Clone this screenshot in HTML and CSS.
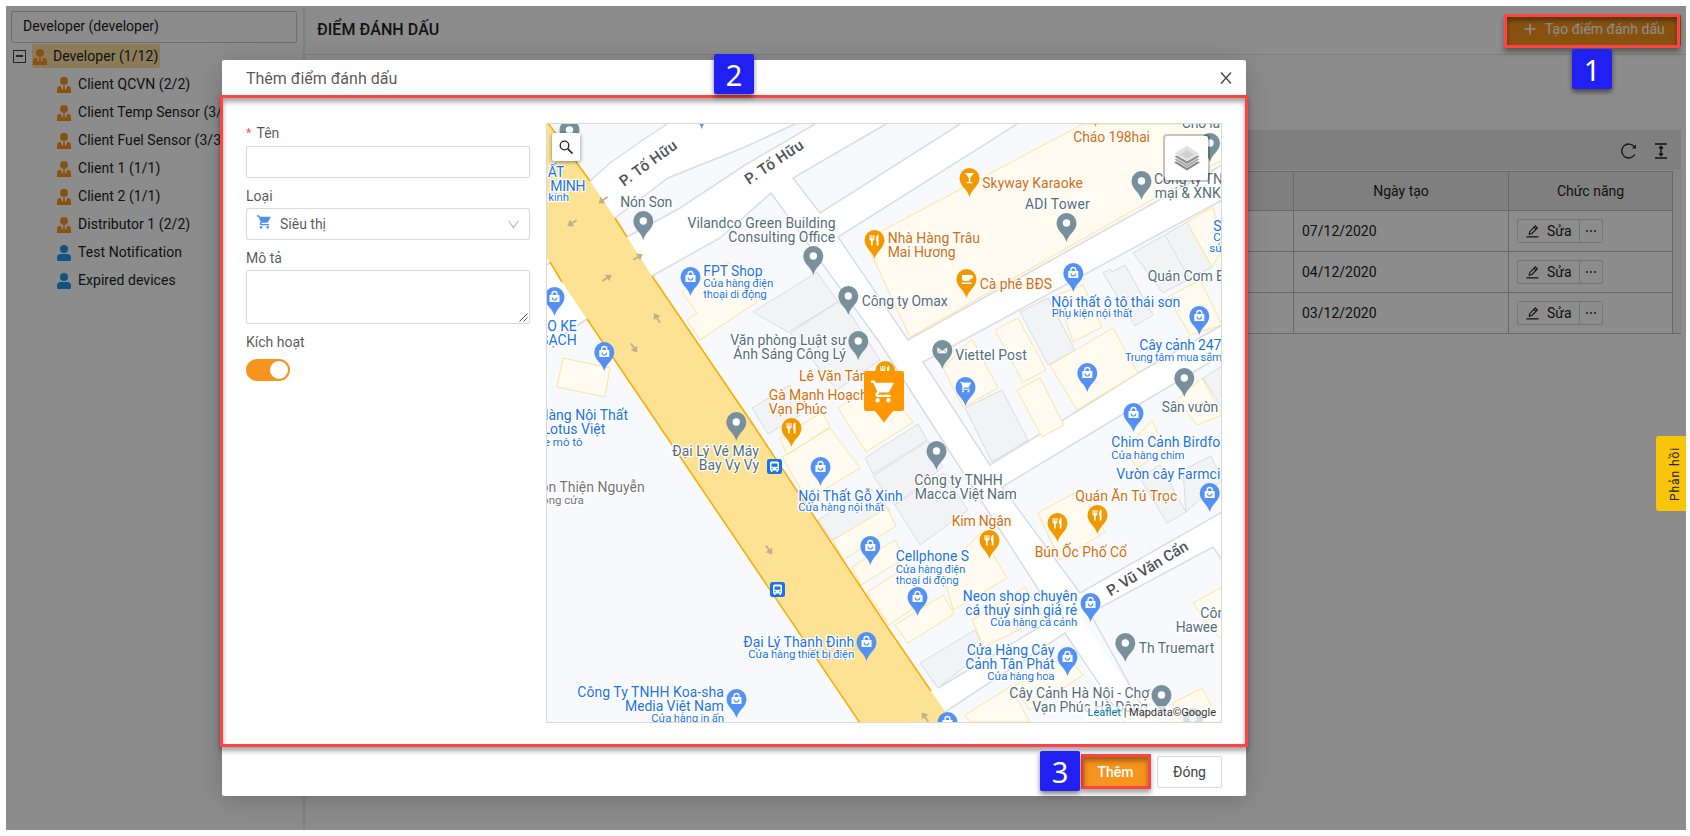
FILE: index.html
```html
<!DOCTYPE html>
<html lang="vi">
<head>
<meta charset="utf-8">
<title>Điểm đánh dấu</title>
<link rel="stylesheet" href="styles.css">
</head>
<body>
<svg width="0" height="0" class="defs">
  <defs>
    <symbol id="manager" viewBox="0 0 14 16"><circle cx="7" cy="4" r="4"/><path d="M0 16v-3.500q0-3.500 3.500-3.700L5.500 13.500 6.300 10 5.700 8.800H8.300L7.700 10 8.500 13.500 10.500 8.800Q14 9 14 12.500V16Z"/></symbol>
    <symbol id="user" viewBox="0 0 14 16"><circle cx="7" cy="4" r="4"/><path d="M0 14.500V13Q0 9 4 9h6q4 0 4 4v1.500q0 1.500-1.500 1.500h-11Q0 16 0 14.500Z"/></symbol>
    <symbol id="cart" viewBox="1 2 21 20"><path d="M7 18a2 2 0 1 0 0 4 2 2 0 0 0 0-4ZM1 2v2h2l3.600 7.600-1.400 2.400C4.500 15.400 5.500 17 7 17h12v-2H7.400l1.100-2h7.500q1.200 0 1.700-1L21.500 5q.5-1-.9-1H5.200l-.9-2ZM17 18a2 2 0 1 0 0 4 2 2 0 0 0 0-4Z"/></symbol>
    <symbol id="edit" viewBox="0 0 14 14"><path d="M.5 13.300h13M3.500 10.500l.7-3L10 1.500l2.200 2.200-5.800 5.900-2.900.9ZM8.500 3l2.200 2.200" fill="none" stroke="currentColor" stroke-width="1.200"/></symbol>
    <g id="drop"><path d="M0 19C-2 11-10 8-10 0A10 10 0 0 1 10 0C10 8 2 11 0 19Z"/></g>
    <g id="pin"><use href="#drop" fill="#78909c"/><circle r="3.700" fill="#fff"/></g>
    <g id="shop"><use href="#drop" fill="#5491f5"/><path d="M-5-2H5V5H-5Z" fill="#fff"/><path d="M-2.500-2v-1a2.500 2.500 0 0 1 5 0v1" fill="none" stroke="#fff" stroke-width="1.300"/><path d="M-2.300.5a2.300 2.500 0 0 0 4.600 0" fill="none" stroke="#5491f5" stroke-width="1.200"/></g>
    <g id="food"><use href="#drop" fill="#f29900"/><path d="M-5-5V-1Q-5 .5-3.400.7V5.500h1.600V.7Q0 .5 0-1V-5H-1V-1.500h-1V-5h-1.200v3.500h-.8V-5ZM2.200 5.500H4V-5.500Q1.500-5 1.500-1V1h.7Z" fill="#fff"/></g>
    <g id="bus"><rect x="-7.500" y="-7.500" width="15" height="15" rx="2.500" fill="#1a73e8"/><path d="M-4.500-3.500Q-4.500-5-3-5H3Q4.500-5 4.500-3.500V4H3.500V5.500H2V4H-2V5.500H-3.500V4H-4.500Z" fill="#fff"/><path d="M-3-3H3V.3H-3Z" fill="#1a73e8"/><circle cx="-2.500" cy="2.200" r=".8" fill="#1a73e8"/><circle cx="2.500" cy="2.200" r=".8" fill="#1a73e8"/></g>
    <path id="arrow" d="M-5.500-1H0V-4L5.500 0 0 4V1H-5.500Z" fill="#c0b088"/>
  </defs>
</svg>

<div class="app">
  <aside class="sidebar">
    <div class="account">Developer (developer)</div>
    <div class="node root"><span class="toggle"></span><span class="picked"><svg class="ico"><use href="#manager"/></svg>Developer (1/12)</span></div>
    <div class="node"><svg class="ico"><use href="#manager"/></svg>Client QCVN (2/2)</div>
    <div class="node"><svg class="ico"><use href="#manager"/></svg>Client Temp Sensor (3/3)</div>
    <div class="node"><svg class="ico"><use href="#manager"/></svg>Client Fuel Sensor (3/3)</div>
    <div class="node"><svg class="ico"><use href="#manager"/></svg>Client 1 (1/1)</div>
    <div class="node"><svg class="ico"><use href="#manager"/></svg>Client 2 (1/1)</div>
    <div class="node"><svg class="ico"><use href="#manager"/></svg>Distributor 1 (2/2)</div>
    <div class="node"><svg class="ico blue"><use href="#user"/></svg>Test Notification</div>
    <div class="node"><svg class="ico blue"><use href="#user"/></svg>Expired devices</div>
  </aside>
  <main class="main">
    <header class="top"><h1>ĐIỂM ĐÁNH DẤU</h1>
      <button class="create"><svg width="12" height="12" viewBox="0 0 12 12"><path d="M6 .5v11M.5 6h11" stroke="#fff" stroke-width="1.600"/></svg>Tạo điểm đánh dấu</button>
    </header>
    <section class="list">
      <div class="tools">
        <svg width="16" height="16" viewBox="0 0 16 16" fill="none" stroke="#222" stroke-width="1.300"><path d="M13.800 11.500A7 7 0 1 1 13.500 4"/><path d="M15 1.500v4h-4Z" fill="#222" stroke="none"/></svg>
        <svg width="14" height="16" viewBox="0 0 14 16" fill="none" stroke="#222" stroke-width="1.400"><path d="M1 1h12M1 15h12M7 4v8M5 5.500l2-2 2 2M5 10.500l2 2 2-2"/></svg>
      </div>
      <div class="grid">
        <div class="row head"><span></span><span>Ngày tạo</span><span>Chức năng</span></div>
        <div class="row"><span></span><span>07/12/2020</span><span><b class="act"><svg width="13" height="14"><use href="#edit"/></svg>Sửa</b><b class="more"><i></i><i></i><i></i></b></span></div>
        <div class="row"><span></span><span>04/12/2020</span><span><b class="act"><svg width="13" height="14"><use href="#edit"/></svg>Sửa</b><b class="more"><i></i><i></i><i></i></b></span></div>
        <div class="row"><span></span><span>03/12/2020</span><span><b class="act"><svg width="13" height="14"><use href="#edit"/></svg>Sửa</b><b class="more"><i></i><i></i><i></i></b></span></div>
      </div>
    </section>
  </main>

  <div class="mask">
    <div class="modal">
      <div class="modal-head"><span>Thêm điểm đánh dấu</span>
        <svg width="12" height="12" viewBox="0 0 12 12"><path d="M1 .5l10 11M11 .5L1 11.500" stroke="#444" stroke-width="1.300"/></svg></div>
      <div class="modal-body">
        <form class="form">
          <label><em>*</em>Tên</label>
          <div class="field"></div>
          <label class="l2">Loại</label>
          <div class="field select"><svg width="14" height="14" fill="#4791f0"><use href="#cart"/></svg><span>Siêu thị</span><svg width="11" height="9" viewBox="0 0 11 9"><path d="M.7 1l4.800 6.700L10.300 1" fill="none" stroke="#bbb" stroke-width="1.200"/></svg></div>
          <label class="l3">Mô tả</label>
          <div class="field area"><svg width="9" height="9" viewBox="0 0 9 9"><path d="M.5 8.500l8-8M4.500 8.500l4-4" stroke="#555" stroke-width="1"/></svg></div>
          <label class="l4">Kích hoạt</label>
          <div class="switch"><i></i></div>
        </form>
        <div class="map">
          <svg class="canvas" viewBox="547 124 674 598" width="674" height="598">
            <rect x="547" y="124" width="674" height="598" fill="#f8f9fc"/>
            <g fill="#fff">
              <path d="M590 181L610 163 640 142 667 124H795L745 147 700 165 668 178 615 218Z"/>
              <path d="M627 237L680 208 745 165 815 124H1017L838 237 771 193 720 238 652 276Z"/>
              <path d="M590 181L615 218 627 237 652 276 640 270Z"/>
              <path d="M771 193L838 237 908 340 1222 165V200L923 362 1002 487 1113 420 1222 355V325L1138 373 990 465 1002 487 1080 593 1222 512V560L1213 547 1080 617 1138 700 1155 723H1120L1065 633 945 712 931 691 1043 625 1040 592 880 343Z"/>
              <path d="M547 263L550 262 562 282 587 319 547 345Z"/>
            </g>
            <path d="M793 178L886 124H960L820 213Z" fill="#f8f9fc"/>
            <g class="kerb">
              <path d="M590 181L610 163 640 142 667 124M615 218L668 178 745 147 795 124M627 237L680 208 745 165 815 124"/>
              <path d="M652 276L720 238 771 193 880 343 923 410 1040 592M886 124L793 178 820 213 960 124M1017 124L838 237 908 340 1222 165M1222 200L923 362 990 465 1063 420 1138 373 1222 325M1222 355L1113 420 1002 487 1080 593 1222 512M1222 560L1213 547 1090 613 1138 700 1155 723M938 688L1043 625M945 712L1065 633 1125 723M547 265L551 262M547 345L587 319"/>
            </g>
            <path d="M867 245L880 232 1083 124H1222V160L910 337Z" class="cream"/>
            <g class="grey">
              <path d="M753 312L817 272 838 302 788 332ZM790 333L838 302 848 310 880 360 837 390ZM752 408L790 385 800 415 768 434ZM818 520L870 488 890 510 832 540ZM865 458L918 424 927 440 873 474ZM873 476L928 441 943 467 895 505ZM895 505L943 473 968 510 920 545Z"/>
              <path d="M1020 312L1048 298 1075 350 1048 365ZM965 408L1002 390 1028 440 992 462ZM1133 253L1187 222 1212 267 1163 293ZM1165 235L1190 280M1103 273L1110 269 1112 272 1125 265 1153 315 1135 326ZM1140 478L1160 465 1186 512 1167 523ZM1183 470L1211 456 1222 480 1186 512ZM920 663L975 630 985 650 938 688ZM1203 378L1222 366V408Z"/>
            </g>
            <g class="cream">
              <path d="M682 292L728 262 757 302 700 340 687 320 697 313ZM563 358L610 368 605 397 557 387ZM780 438L822 412 830 427 787 455ZM782 457L830 428 860 468 807 500ZM838 408L880 382 913 422 866 452ZM833 540L887 508 896 526 843 560ZM852 567L895 540 905 558 861 585ZM867 592L905 568 925 600 889 625Z"/>
              <path d="M943 573L980 533 1007 578 953 610ZM895 625L943 595 954 614 908 643ZM972 620L1025 587 1043 618 984 647ZM1038 513L1080 490 1105 532 1060 560ZM965 715L1010 687 1030 722H970ZM1013 687L1067 655 1083 675 1030 710ZM943 368L972 339 998 388 963 407ZM995 330L1018 318 1046 370 1023 382ZM1017 390L1040 378 1064 425 1042 437ZM1050 365L1113 328 1138 373 1077 410ZM1057 295L1083 285 1102 327 1073 342ZM1168 297L1200 280 1222 325 1190 335ZM1187 222L1213 207 1222 250 1212 267ZM1177 400L1202 378 1222 415 1197 425ZM1125 450L1152 420 1165 450 1137 468ZM1193 603L1222 587V640L1205 620ZM1173 703L1202 688 1220 722H1173Z"/>
            </g>
            <path d="M547 123L590 181 615 218 627 237 652 276 750 420 890 631 931 691 953 723H860L587 319 562 282 547 258Z" fill="#fde293"/>
            <path d="M548 123L590 181M615 218L627 237M652 276L750 420 890 631 931 691M587 319L860 723M550 262L562 282" fill="none" stroke="#f9ab00" stroke-width="1.500"/>
            <use href="#arrow" transform="translate(603 200) rotate(145)"/><use href="#arrow" transform="translate(572 223) rotate(150)"/><use href="#arrow" transform="translate(638 257) rotate(-30)"/><use href="#arrow" transform="translate(607 278) rotate(-33)"/><use href="#arrow" transform="translate(657 318) rotate(-122)"/><use href="#arrow" transform="translate(634 348) rotate(56)"/><use href="#arrow" transform="translate(769 550) rotate(56)"/><use href="#arrow" transform="translate(925 717) rotate(-125)"/>

            <use href="#pin" x="569.500" y="130"/><use href="#pin" x="643.300" y="221"/><use href="#pin" x="813.300" y="256"/><use href="#pin" x="848.300" y="296"/><use href="#pin" x="858.300" y="341"/><use href="#pin" x="736.300" y="422"/><use href="#pin" x="1141.500" y="181"/><use href="#pin" x="1066.500" y="223"/><use href="#pin" x="1184.300" y="378"/><use href="#pin" x="1210" y="143"/><use href="#pin" x="936.500" y="451"/><use href="#pin" x="1125.300" y="643"/><use href="#pin" x="1161.500" y="695"/><use href="#pin" x="1193" y="718"/>
            <use href="#drop" x="942.300" y="350" fill="#78909c"/><path d="M937 346.500h10.600v7.200H937ZM937 346.500l5.300 4 5.300-4M937 353.700l4-4M947.600 353.700l-4-4" fill="#fff" stroke="#78909c" stroke-width=".8"/>
            <use href="#shop" x="701.700" y="110"/><use href="#shop" x="690.500" y="277"/><use href="#shop" x="554.500" y="297"/><use href="#shop" x="604.300" y="352"/><use href="#shop" x="820.500" y="467"/><use href="#shop" x="870.300" y="546"/><use href="#shop" x="866.500" y="642"/><use href="#shop" x="736.500" y="699"/><use href="#shop" x="917.500" y="597"/><use href="#shop" x="1090.500" y="603"/><use href="#shop" x="1067.500" y="657"/><use href="#shop" x="947.500" y="722"/><use href="#shop" x="1133.500" y="413"/><use href="#shop" x="1209.700" y="493"/><use href="#shop" x="1087.300" y="373"/><use href="#shop" x="1073.300" y="273"/><use href="#shop" x="1199.300" y="316"/>
            <use href="#drop" x="965.500" y="387" fill="#5491f5"/><use href="#cart" x="959.500" y="381.500" width="12" height="11" fill="#fff"/>
            <use href="#drop" x="969.500" y="178" fill="#f29900"/><path d="M965 173h9l-3.800 4.800v4.200h2v1.200h-5.400V182h2v-4.200Z" fill="#fff"/>
            <use href="#drop" x="966.500" y="279" fill="#f29900"/><path d="M962 275h9.500q1.500 0 1.500 1.700T971 279h-.5q-.5 2-2.500 2h-3.500q-2.500 0-2.500-2.500ZM961.500 282.500h10v1.500h-10Z" fill="#fff"/>
            <use href="#food" x="874.500" y="240"/><use href="#food" x="791.500" y="428"/><use href="#food" x="989.500" y="540"/><use href="#food" x="1057.500" y="523"/><use href="#food" x="1097.500" y="515"/><use href="#food" x="885.300" y="371"/><use href="#food" x="1095.500" y="108"/>
            <use href="#bus" x="774.500" y="466.500"/><use href="#bus" x="777.500" y="589.500"/>

            <g class="lbl slate">
              <text x="620.300" y="207" textLength="52">Nón Sơn</text>
              <text x="687.500" y="228.300" textLength="148">Vilandco Green Building</text><text x="728.300" y="242.300" textLength="107">Consulting Office</text>
              <text x="861.700" y="306" textLength="86">Công ty Omax</text>
              <text x="730.300" y="344.700" textLength="116">Văn phòng Luật sư</text><text x="733.300" y="358.700" textLength="112.500">Ánh Sáng Công Lý</text>
              <text x="672.300" y="456" textLength="86.500">Đại Lý Vé Máy</text><text x="698.700" y="470" textLength="60.500">Bay Vy Vy</text>
              <text x="1181.700" y="128" textLength="38.500">Chờ la</text><text x="1025" y="209.300" textLength="64.700">ADI Tower</text>
              <text x="1154" y="184">Công ty TNHH</text><text x="1154.700" y="198" textLength="66">mại &amp; XNK</text>
              <text x="955.300" y="360" textLength="71.500">Viettel Post</text><text x="1147.700" y="281.300" textLength="77">Quán Cơm B</text>
              <text x="1161.700" y="411.700" textLength="56.500">Sân vườn</text>
              <text x="914.300" y="485" textLength="88.500">Công ty TNHH</text><text x="914.700" y="499" textLength="102">Macca Việt Nam</text>
              <text x="1200.300" y="618">Công</text><text x="1175.700" y="632" textLength="41.700">Hawee</text>
              <text x="1138.700" y="653.300" textLength="75.600">Th Truemart</text>
              <text x="1009.300" y="698" textLength="140">Cây Cảnh Hà Nội - Chợ</text><text x="1032.300" y="712" textLength="115.500">Vạn Phúc Hà Đông</text>
            </g>
            <g class="lbl ash"><text x="540.500" y="492" textLength="104.200">òn Thiện Nguyễn</text><text class="s" x="583.700" y="503.700" text-anchor="end">đóng cửa</text></g>
            <g class="lbl amber">
              <text x="1073.300" y="142" textLength="76.700">Cháo 198hai</text><text x="982.300" y="187.700" textLength="100.700">Skyway Karaoke</text>
              <text x="887.700" y="243" textLength="92.300">Nhà Hàng Trâu</text><text x="887.700" y="257" textLength="68">Mai Hương</text>
              <text x="979.700" y="288.700" textLength="72.300">Cà phê BĐS</text><text x="799" y="381">Lê Văn Tám</text>
              <text x="768.700" y="400.300" textLength="99">Gà Mạnh Hoạch</text><text x="768.700" y="414.300" textLength="58.300">Vạn Phúc</text>
              <text x="951.700" y="526" textLength="59.700">Kim Ngân</text><text x="1075.300" y="501" textLength="102">Quán Ăn Tú Trọc</text><text x="1034.700" y="557" textLength="92.300">Bún Ốc Phố Cổ</text>
            </g>
            <g class="lbl azure">
              <text x="547.700" y="177">ẤT</text><text x="550.300" y="191.300" textLength="35.300">MINH</text><text class="s" x="548.300" y="201" textLength="20.700">kính</text>
              <text x="703.300" y="276.300" textLength="59.300">FPT Shop</text><text class="s" x="703.300" y="287" textLength="70">Cửa hàng điện</text><text class="s" x="703.300" y="298" textLength="63.500">thoại di động</text>
              <text x="547.300" y="331" textLength="29.500">O KE</text><text x="576.700" y="345.300" text-anchor="end">GẠCH</text>
              <text x="628" y="420" text-anchor="end">Hàng Nội Thất</text><text x="605.300" y="434" text-anchor="end">Lotus Việt</text><text class="s" x="582.500" y="445.700" text-anchor="end">xe mô tô</text>
              <text x="798.300" y="501" textLength="104.500">Nội Thất Gỗ Xinh</text><text class="s" x="798.300" y="511.300" textLength="86">Cửa hàng nội thất</text>
              <text x="743.300" y="647" textLength="111">Đại Lý Thanh Đinh</text><text class="s" x="748.300" y="657.700" textLength="106">Cửa hàng thiết bị điện</text>
              <text x="577.300" y="697.300" textLength="146.500">Công Ty TNHH Koa-sha</text><text x="625" y="711" textLength="98.700">Media Việt Nam</text><text class="s" x="651.300" y="721.500" textLength="72.700">Cửa hàng in ấn</text>
              <text x="1051.300" y="307" textLength="129">Nội thất ô tô thái sơn</text><text class="s" x="1051.700" y="317.300" textLength="80.700">Phụ kiện nội thất</text>
              <text x="1139.300" y="349.700" textLength="82">Cây cảnh 247</text><text class="s" x="1124.700" y="360.700" textLength="97.500">Trung tâm mua sắm</text>
              <text x="1213.300" y="230.700">S</text><text class="s" x="1213.300" y="241">C</text><text class="s" x="1209.300" y="252">sửa</text>
              <text x="1111.300" y="447" textLength="109">Chim Cảnh Birdfo</text><text class="s" x="1111.300" y="458.700" textLength="73.300">Cửa hàng chim</text>
              <text x="1116.300" y="479" textLength="104">Vườn cây Farmci</text>
              <text x="895.700" y="561" textLength="73.300">Cellphone S</text><text class="s" x="895.700" y="572.700" textLength="69.700">Cửa hàng điện</text><text class="s" x="895.700" y="583.700" textLength="63">thoại di động</text>
              <text x="962.700" y="601" textLength="114.700">Neon shop chuyên</text><text x="965.300" y="615" textLength="112">cá thuỷ sinh giá rẻ</text><text class="s" x="990.300" y="625.700" textLength="87">Cửa hàng cá cảnh</text>
              <text x="966.700" y="655" textLength="87.700">Cửa Hàng Cây</text><text x="965.300" y="669" textLength="89.300">Cảnh Tân Phát</text><text class="s" x="987.300" y="679.700" textLength="67.300">Cửa hàng hoa</text>
            </g>
            <g class="lbl street">
              <text transform="translate(624 187) rotate(-36)" textLength="67">P. Tố Hữu</text>
              <text transform="translate(749 185) rotate(-34)" textLength="67">P. Tố Hữu</text>
              <text transform="translate(1110.500 596.500) rotate(-31)" textLength="92">P. Vũ Văn Cẩn</text>
            </g>
            <path d="M866 371h36q2 0 2 2v36q0 2-2 2h-9L884 422.500 875 411h-9q-2 0-2-2V373q0-2 2-2Z" fill="#ff9800"/>
            <use href="#cart" x="871" y="380" width="23" height="23" fill="#fff"/>
          </svg>
          <div class="search"><svg width="15" height="15" viewBox="0 0 15 15" fill="none" stroke="#222"><circle cx="5.500" cy="5.500" r="4.300" stroke-width="1.300"/><path d="M8.800 8.800l4.700 4.700" stroke-width="1.700"/></svg></div>
          <div class="layers"><svg width="26" height="26" viewBox="0 0 26 26"><path d="M0 17.500l13-7 13 7-13 8Z" fill="#8a8a8a"/><path d="M0 14.500l13-7 13 7-13 8Z" fill="#a8a8a8" stroke="#fff" stroke-width=".7"/><path d="M0 11.500l13-7 13 7-13 8Z" fill="#8d8d8d" stroke="#fff" stroke-width=".7"/><path d="M0 8.500L13 .5l13 8-13 7.500Z" fill="#e2e2e2" stroke="#fff" stroke-width=".7"/><path d="M6 9.500L13 5l7 4.500-7 4Z" fill="#d0d0d0"/></svg></div>
          <div class="credit"><a>Leaflet</a> | Mapdata©Google</div>
        </div>
      </div>
      <div class="modal-foot"><button class="add">Thêm</button><button class="close">Đóng</button></div>
    </div>
  </div>
  <div class="feedback"><span>Phản hồi</span></div>
</div>
<div class="frame f1"></div><div class="frame f2"></div><div class="frame f3"></div>
<div class="num n1">1</div><div class="num n2">2</div><div class="num n3">3</div>
</body>
</html>
```
FILE: styles.css
```css
* { box-sizing: border-box; }
body { margin: 0; padding: 6px 4px 6px 6px; width: 1690px; height: 836px; overflow: hidden; background: #fff; font: 14px/20px Roboto, sans-serif; color: #222; position: relative; }
.defs { position: absolute; }
button { font: inherit; cursor: pointer; }
.app { position: relative; display: flex; width: 1680px; height: 824px; background: #fff; overflow: hidden; }

/* account tree */
.sidebar { width: 299px; flex: none; border-right: 2px solid #ebebeb; padding: 5px 5px 0; }
.account { height: 32px; width: 286px; border: 1px solid #c8c8c8; border-radius: 2px; padding: 4px 11px; margin-bottom: -1px; }
.node { display: flex; align-items: center; height: 28px; padding-left: 46px; white-space: nowrap; letter-spacing: .05px; }
.root { padding-left: 2px; }
.toggle { width: 13px; height: 13px; border: 1.500px solid #444; margin-right: 6px; display: flex; align-items: center; justify-content: center; }
.toggle::after { content: ""; width: 7px; height: 1.500px; background: #444; }
.picked { display: flex; align-items: center; height: 24px; padding: 0 2px 0 1px; background: #ffe1a0; border-radius: 2px; }
.ico { width: 14px; height: 16px; margin-right: 7px; fill: #f7941d; position: relative; top: 1px; }
.picked .ico { margin-right: 6px; }
.blue { fill: #2196e8; }

/* listing */
.main { flex: 1; padding-right: 5px; }
.top { height: 49px; margin-right: -5px; border-bottom: 1px solid #e8e8e8; display: flex; justify-content: space-between; padding: 8px 5px 0 12px; }
h1 { font-size: 16px; font-weight: 500; margin: 6px 0 0; line-height: 20px; letter-spacing: .08px; }
.create { width: 177px; height: 32px; border: 0; border-radius: 2px; background: #f7941d; color: #fff; display: flex; align-items: center; gap: 9px; padding: 0 0 2px 20px; white-space: nowrap; }
.list { margin: 75px 0 0 15px; }
.tools { height: 40px; background: #e8e8e8; display: flex; justify-content: flex-end; align-items: center; gap: 17px; padding-right: 13px; padding-top: 2px; }
.grid { margin-top: 1px; background: #f4f4f4; border-bottom: 1px solid #c0c0c0; }
.row { display: grid; grid-template-columns: 1fr 215px 164px; height: 41px; margin-right: 8px; background: #fff; }
.row > span { border-top: 1px solid #c0c0c0; border-right: 1px solid #c0c0c0; display: flex; align-items: center; padding-left: 8px; }
.head { height: 39px; background: #e8e8e8; }
.head > span { justify-content: center; padding: 0; }
.act, .more { font-weight: 400; height: 24px; border: 1px solid #d5d5d5; display: flex; align-items: center; border-radius: 2px 0 0 2px; }
.act { width: 63px; padding-left: 8px; gap: 8px; }
.more { width: 24px; margin-left: -1px; justify-content: center; gap: 2px; border-radius: 0 2px 2px 0; }
.more i { width: 2px; height: 2px; background: #333; border-radius: 1px; }

/* dialog */
.mask { position: absolute; inset: 0; background: rgba(0, 0, 0, .45); padding: 54px 0 0 216px; }
.modal { width: 1024px; height: 736px; background: #fff; border-radius: 2px; box-shadow: 0 4px 24px rgba(0, 0, 0, .2); display: flex; flex-direction: column; color: rgba(0, 0, 0, .68); }
.modal-head { height: 36px; display: flex; justify-content: space-between; align-items: center; padding: 0 14px 0 24px; font-size: 16px; }
.modal-head span { padding-top: 1px; }
.modal-body { flex: 1; display: flex; justify-content: space-between; padding: 27px 24px 0; }
.form { width: 284px; }
.form label { display: block; height: 20px; margin-bottom: 3px; }
.form em { color: #ff4d4f; font: 14px/14px "Liberation Sans", sans-serif; margin-right: 5px; }
.form .l2 { margin-top: 8px; margin-bottom: 2px; }
.form .l3 { margin-top: 8px; margin-bottom: 2px; }
.form .l4 { margin-top: 8px; margin-bottom: 7px; }
.field { height: 32px; border: 1px solid #d9d9d9; border-radius: 2px; }
.select { display: flex; align-items: center; padding: 0 10px; gap: 9px; }
.select span { flex: 1; padding-bottom: 1px; }
.select svg:first-child { margin-top: -4px; }
.area { height: 54px; display: flex; justify-content: flex-end; align-items: flex-end; padding: 1px; }
.switch { width: 44px; height: 22px; border-radius: 11px; background: #f7941d; display: flex; justify-content: flex-end; padding: 2px; }
.switch i { width: 18px; height: 18px; border-radius: 50%; background: #fff; }
.modal-foot { height: 49px; display: flex; justify-content: flex-end; gap: 8px; padding: 9px 24px 0; }
.modal-foot button { height: 32px; border-radius: 2px; border: 1px solid #d9d9d9; background: #fff; color: #444; padding: 0 0 1px; }
.modal-foot .add { width: 67px; background: #f7941d; border-color: #f7941d; color: #fff; font-weight: 500; }
.modal-foot .close { width: 65px; }

/* map */
.map { position: relative; width: 676px; height: 600px; border: 1px solid #d9d9d9; overflow: hidden; }
.canvas { display: block; }
.kerb path { fill: none; stroke: #dadce0; stroke-width: 1.500; }
.grey path { fill: #f1f3f4; stroke: #dadce0; }
.cream path, path.cream { fill: #fffbf0; stroke: #fde49b; }
.lbl text { font: 14px Roboto, sans-serif; paint-order: stroke; stroke: #fff; stroke-width: 2.500px; stroke-linejoin: round; }
.lbl .s { font-size: 11.500px; }
.slate { fill: #546e7a; }
.ash { fill: #757575; }
.amber { fill: #d56e0c; }
.azure { fill: #1a73e8; }
.street { fill: #4d5156; }
.street text { font-size: 15px; font-weight: 500; }
.search, .layers { position: absolute; background: #fff; display: flex; align-items: center; justify-content: center; }
.search { left: 5px; top: 9px; width: 28px; height: 28px; border-radius: 2px; box-shadow: 0 1px 4px rgba(0, 0, 0, .45); }
.layers { right: 11px; top: 10px; width: 47px; height: 48px; border: 2px solid rgba(0, 0, 0, .22); border-radius: 4px; background-clip: padding-box; }
.credit { position: absolute; right: 0; bottom: 0; height: 16px; padding: 0 5px 0 4px; background: rgba(255, 255, 255, .7); font-size: 11px; line-height: 14px; color: #333; }
.credit a { color: #0078a8; }

.feedback { position: absolute; right: 0; top: 430px; width: 30px; height: 75px; background: #f8c509; border-radius: 3px 0 0 3px; display: flex; align-items: center; justify-content: center; padding-left: 8px; }
.feedback span { writing-mode: vertical-rl; transform: rotate(180deg); font-size: 12px; letter-spacing: .9px; line-height: 14px; }

/* numbered walkthrough callouts */
.frame { position: absolute; border: 3px solid #ff4343; box-shadow: 0 4px 5px rgba(0, 0, 0, .35), inset 0 4px 5px rgba(0, 0, 0, .35); }
.f1 { left: 1504px; top: 14px; width: 176px; height: 34px; }
.f2 { left: 220px; top: 95px; width: 1028px; height: 652px; }
.f3 { left: 1081px; top: 754px; width: 70px; height: 35px; }
.num { position: absolute; width: 40px; height: 40px; border-radius: 2px; background: #2020f2; color: #fff; font: 29px/41px "Noto Sans", sans-serif; text-align: center; box-shadow: 0 3px 5px rgba(0, 0, 0, .5); }
.n1 { left: 1572px; top: 49px; }
.n2 { left: 714px; top: 54px; }
.n3 { left: 1040px; top: 751px; }
```
